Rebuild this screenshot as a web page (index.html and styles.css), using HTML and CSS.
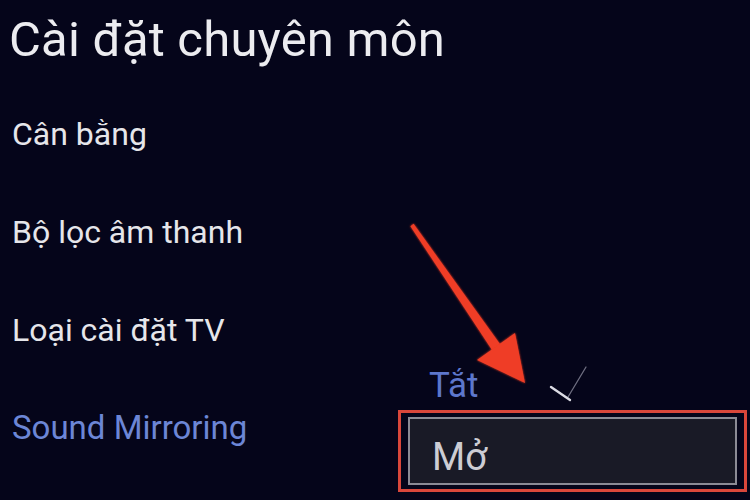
FILE: index.html
```html
<!DOCTYPE html>
<html lang="vi">
<head>
<meta charset="utf-8">
<title>Cài đặt chuyên môn</title>
<link rel="stylesheet" href="styles.css">
</head>
<body>
<div class="screen">
  <h1 class="title">Cài đặt chuyên môn</h1>
  <ul class="menu">
    <li class="item">Cân bằng</li>
    <li class="item">Bộ lọc âm thanh</li>
    <li class="item">Loại cài đặt TV</li>
    <li class="item active">Sound Mirroring</li>
  </ul>

  <div class="popup">
    <div class="option off">
      <span class="label">Tắt</span>
      <svg class="check" width="40" height="40" viewBox="0 0 40 40">
        <path d="M20 33 L38 3" stroke="#6e6e80" stroke-width="1.3" fill="none" stroke-linecap="round"/>
        <path d="M3 23 L22 36" stroke="#dcdce4" stroke-width="2.4" fill="none" stroke-linecap="round"/>
      </svg>
    </div>
    <div class="option selected">
      <div class="inner"><span class="label">Mở</span></div>
    </div>
  </div>

  <svg class="arrow" width="750" height="500" viewBox="0 0 750 500">
    <defs>
      <filter id="glow" x="-20%" y="-20%" width="140%" height="140%">
        <feGaussianBlur stdDeviation="1.2" result="b"/>
        <feMerge><feMergeNode in="b"/><feMergeNode in="SourceGraphic"/></feMerge>
      </filter>
    </defs>
    <g filter="url(#glow)" fill="#ef3d25">
      <polygon points="410.4,226.2 413.6,223.8 500,344 492,350"/>
      <polygon points="477,360 515,333 525,383"/>
    </g>
  </svg>
</div>
</body>
</html>
```
FILE: styles.css
```css
html, body {
  margin: 0;
  padding: 0;
  background: #05051a;
}
.screen {
  position: relative;
  width: 750px;
  height: 500px;
  overflow: hidden;
  background: #05051a;
  font-family: Roboto, "Noto Sans", sans-serif;
  color: #ececf0;
}
.title {
  margin: 0;
  padding: 11px 0 0 9px;
  font-size: 49px;
  font-weight: 400;
  line-height: 58px;
  letter-spacing: 0.2px;
  color: #ececf0;
}
.menu {
  list-style: none;
  margin: 0;
  padding: 46px 0 0 12px;
  display: flex;
  flex-direction: column;
  gap: 60px;
}
.item {
  font-size: 32px;
  line-height: 38px;
  color: #e6e6ea;
}
.item.active {
  font-size: 33px;
  color: #6c86d6;
}
.popup {
  position: absolute;
  left: 398px;
  top: 360px;
  width: 349px;
}
.option.off {
  display: flex;
  align-items: flex-end;
  height: 50px;
  padding-left: 31px;
}
.option.off .label {
  font-size: 35px;
  line-height: 48px;
  color: #5d77cc;
}
.check {
  margin-left: 70px;
  margin-bottom: 6px;
}
.option.selected {
  border: 3px solid #d9473b;
  padding: 4px 7px;
  box-sizing: border-box;
  height: 82px;
}
.inner {
  height: 100%;
  box-sizing: border-box;
  border: 2px solid #8b8b95;
  background: #191a26;
  display: flex;
  align-items: flex-start;
  padding-left: 22px;
}
.inner .label {
  font-size: 38px;
  line-height: 48px;
  margin-top: 14px;
  color: #cdcdd4;
}
.arrow {
  position: absolute;
  left: 0;
  top: 0;
  pointer-events: none;
}
```
